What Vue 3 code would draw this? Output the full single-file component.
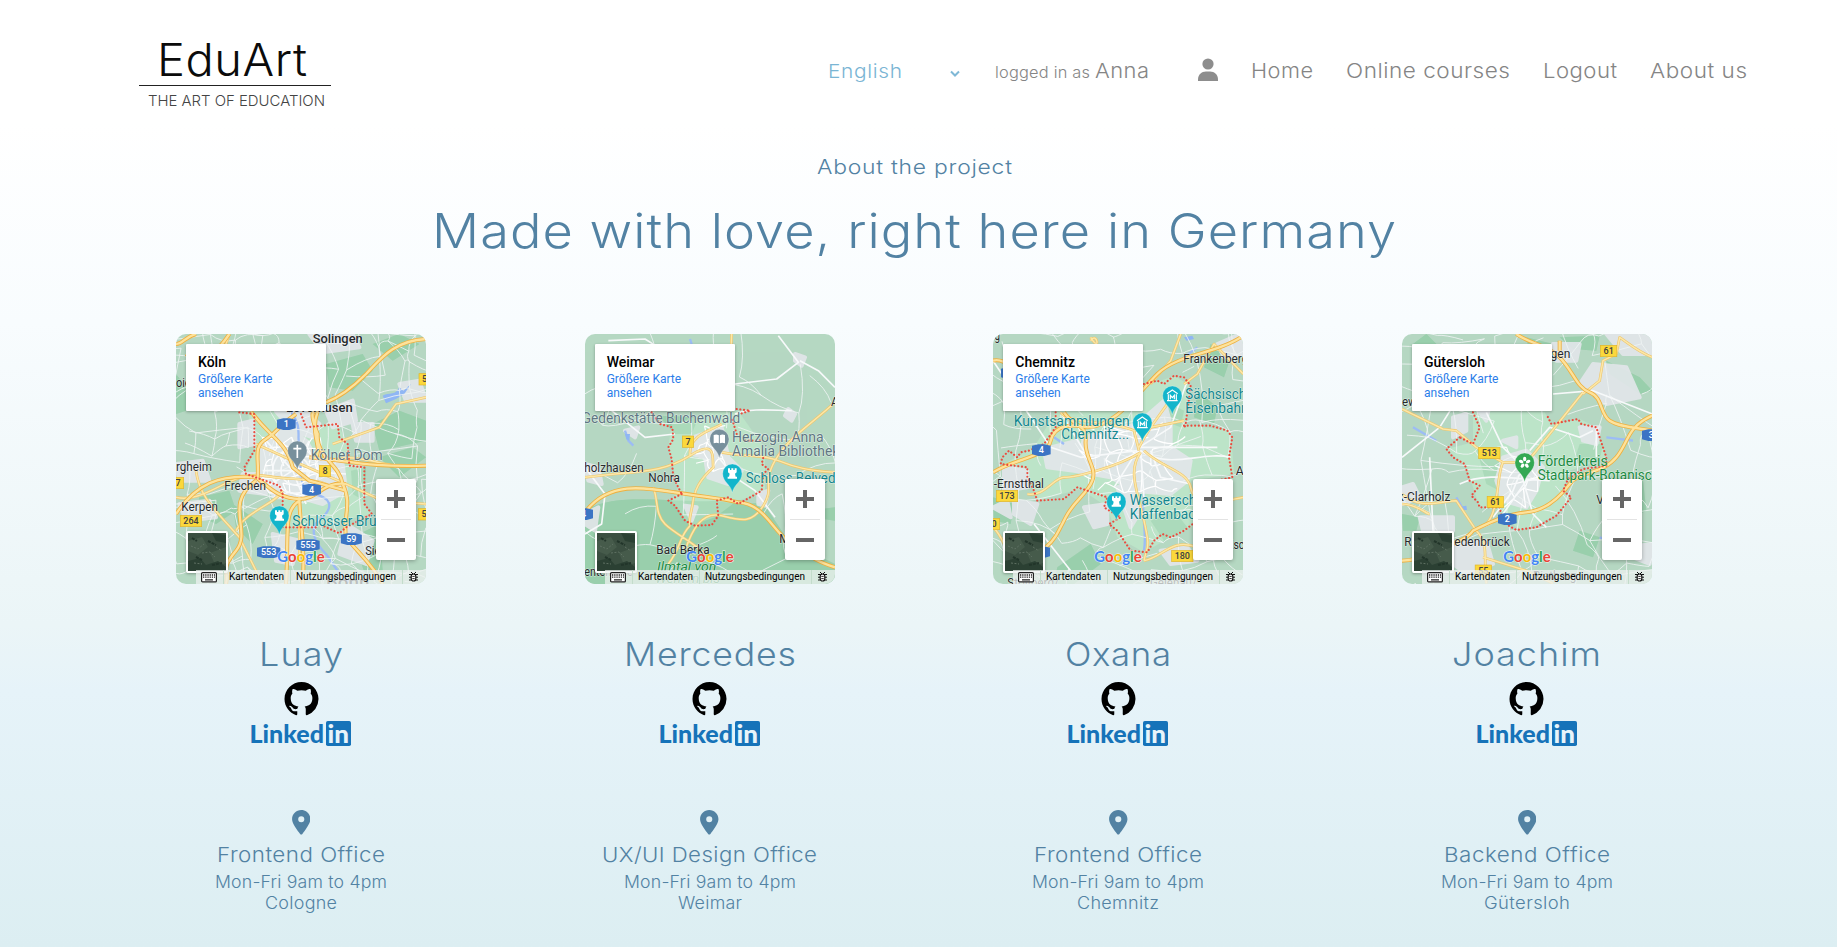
<script setup>
const LINKS = [
  { label: 'Home', w: 62 },
  { label: 'Online courses', w: 164 },
  { label: 'Logout', w: 74 },
  { label: 'About us', w: 97 },
]

// Widens the letters of an element, and the gaps between them, to a given width
const vFit = {
  mounted(el, { value }) {
    const natural = el.getBoundingClientRect().width
    const count = [...el.textContent.trim()].length
    const spacing = ((value - natural) * 0.3) / (count - 1)
    el.style.letterSpacing = spacing + 'px'
    el.style.width = value + 'px'
    el.style.transform = `scaleX(${value / (natural + spacing * (count - 1))})`
  },
}

// Web of small roads: jittered grid points joined to their neighbours
function roadWeb(seed, step, x0, y0, x1, y1, keep) {
  let s = seed
  const rnd = () => {
    s = (s * 16807) % 2147483647
    return s / 2147483647
  }
  const rows = []
  for (let y = y0; y <= y1; y += step) {
    const row = []
    for (let x = x0; x <= x1; x += step) {
      row.push([x + (rnd() - 0.5) * step * 0.9, y + (rnd() - 0.5) * step * 0.9])
    }
    rows.push(row)
  }
  let d = ''
  const join = (a, b) => {
    const mx = (a[0] + b[0]) / 2 + (rnd() - 0.5) * step * 0.4
    const my = (a[1] + b[1]) / 2 + (rnd() - 0.5) * step * 0.4
    d += `M${a[0].toFixed(1)} ${a[1].toFixed(1)}Q${mx.toFixed(1)} ${my.toFixed(1)} ${b[0].toFixed(1)} ${b[1].toFixed(1)}`
  }
  rows.forEach((row, j) =>
    row.forEach((p, i) => {
      if (row[i + 1] && rnd() < keep) join(p, row[i + 1])
      if (rows[j + 1] && rnd() < keep) join(p, rows[j + 1][i])
    })
  )
  return d
}

const GREY = '#5f7682'
const TEAL = '#12868f'
const DARK = '#26292c'
const GREEN = '#1b8a42'

const people = [
  {
    name: 'Luay', nameW: 84, office: 'Frontend Office', officeW: 168, city: 'Cologne', cityW: 72,
    place: 'Köln', ox: 30,
    light: 'M245 262L400 262 420 310 515 300 545 360 550 425 595 430 595 540 615 570 450 610 350 610 345 510 235 450 265 380Z',
    woods: 'M555 440L600 430 595 530 560 510ZM620 300L700 260 780 290 780 350 640 380ZM480 120L590 90 620 140 560 200 490 190ZM620 60L700 30 760 60 680 110ZM100 520L190 500 210 560 150 600 90 570ZM640 400L740 370 780 400 700 460ZM30 150L60 190 60 260 30 270ZM560 640L640 600 650 740 600 760ZM200 540L290 600 260 660 210 610Z',
    urban: 'M290 350L360 310 420 350 450 400 530 420 540 500 470 540 400 520 330 520 280 470ZM330 262L420 262 460 300 440 340 380 320ZM220 300L260 290 265 360 220 370ZM430 30L560 30 580 70 470 85ZM230 450L290 450 300 510 220 500ZM40 540L130 530 150 580 60 590ZM560 300L620 300 620 350 570 350ZM540 600L620 650 600 720 520 690ZM480 260L560 230 570 290 500 310ZM700 180L760 170 780 230 720 230ZM30 420L110 410 130 470 40 470ZM320 630L400 650 380 720 330 710Z',
    water: 'M372 262C420 320 380 340 410 400C390 450 410 500 440 510C500 520 500 550 470 580C420 610 450 660 480 690C510 730 520 760 560 780',
    lake: 'M650 215C670 205 690 215 700 190L712 200 735 180 715 210 690 225 660 238Z',
    web: [[17, 62, 0.62], [91, 100, 0.6]], core: [31, 26, 300, 350, 480, 510, 0.75],
    whites: 'M380 440L300 350 M380 440L430 350 M380 440L540 450 M380 440L420 540 M380 440L300 490 M290 440L470 440 M345 440A42 42 0 1 1 430 440A42 42 0 1 1 345 440 M320 440A68 68 0 1 1 456 440A68 68 0 1 1 320 440',
    minor: 'M30 520C120 540 190 440 290 455S450 460 500 490 M180 60L190 30 M485 410C600 380 640 440 780 425 M500 360L640 310 690 240 780 220 M90 440C100 520 150 560 220 640L290 780 M210 620C240 560 330 540 350 500 M540 480L650 530 780 540 M400 530V700 M270 360L380 410 540 480',
    major: 'M780 45C680 50 640 110 600 150S520 220 480 235 M480 235C420 250 440 290 455 330C450 400 520 420 530 480C560 540 530 580 540 640C570 680 620 720 650 780 M455 262C430 330 470 370 450 400 M255 262C310 340 360 350 380 430L430 470 540 500 M30 570C90 480 160 450 270 460C310 490 340 525 400 525S470 470 540 480 M275 460C280 400 260 370 300 345S330 310 390 270 M270 470C170 540 260 620 210 680S190 740 180 780 M400 520C400 600 420 650 410 780 M400 530C350 560 370 630 360 780 M30 60C50 60 55 40 90 30 M60 90C120 130 170 60 190 30 M430 400C550 410 600 430 780 425',
    border: 'M220 265L265 270 265 380 235 430 240 450 340 485 350 510 350 610 460 610 M405 270L420 310 515 300 520 340 545 360 550 425 595 430 595 540 618 570 540 610 520 628 470 605',
    shields: [['b', 361, 300, '1'], ['y', 477, 441, '8'], ['b', 437, 497, '4'], ['y', 36, 477, '7'], ['y', 75, 591, '264'], ['b', 308, 684, '553'], ['b', 426, 663, '555'], ['b', 556, 645, '59'], ['y', 776, 166, '5'], ['y', 774, 571, '5']],
    labels: [['Solingen', 440, 58, 150, 38, DARK, 500], ['Leverkusen', 360, 265, 200, 38, DARK, 500], ['oie', 30, 190, 44, 37, DARK], ['rgheim', 30, 441, 108, 37, DARK], ['Frechen', 175, 498, 125, 37, DARK], ['Kerpen', 46, 561, 110, 37, DARK], ['Siegburg', 598, 693, 130, 37, DARK], ['Bonn', 480, 792, 130, 50, DARK, 500], ['Kölner Dom', 434, 409, 216, 42, GREY], ['Schlösser Brühl', 379, 606, 285, 42, TEAL]],
    pins: [['#78909c', 394, 380, 'cross'], ['#12b5cb', 340, 575, 'tower']],
  },
  {
    name: 'Mercedes', nameW: 172, office: 'UX/UI Design Office', officeW: 215, city: 'Weimar', cityW: 64,
    place: 'Weimar', ox: 30,
    light: 'M290 300L420 262 490 262 560 360 570 410 570 500 480 535 420 580 345 605 290 530 310 490 280 370Z',
    woods: 'M250 275L370 280 350 330 300 330ZM30 560C130 500 300 540 420 530C520 550 560 520 580 560L640 650 780 720 780 780 30 780ZM700 560L780 550 780 590 710 580Z',
    urban: 'M340 345L440 310 460 400 500 440 460 480 400 460 390 400 350 390ZM640 255L660 270 650 290 630 275ZM660 90L690 100 680 125 660 110ZM550 510L580 500 570 545 550 540ZM30 420L70 430 80 480 40 470ZM30 570L70 550 60 620 30 600ZM330 545L365 550 350 590ZM150 320L190 310 180 340Z',
    water: 'M150 320L160 350 175 365 M345 45L350 60 M640 625C630 650 640 680 660 700',
    lake: 'M150 330L165 330 163 350 154 346Z',
    web: [[55, 105, 0.42]], core: [77, 26, 370, 310, 460, 460, 0.6],
    whites: 'M480 180L605 165 670 115 640 75 610 35 M675 110L730 140 780 190 M480 270C530 250 600 260 650 260 M110 260L210 340 300 330 M30 430L90 510 80 600 30 630 M430 400L480 460 540 500 600 580 M100 50L210 45 250 70',
    minor: 'M470 30L468 80 M780 235C710 300 640 340 600 410S600 490 565 545S500 590 440 575S350 620 330 680 M345 395C340 330 410 320 440 300 M30 460C180 440 260 450 345 395S410 410 415 430C360 480 360 510 355 525C350 570 340 580 345 605 M235 490C250 530 240 570 270 600S350 650 390 690 M440 385C520 400 560 390 610 410S700 440 780 445 M345 605C310 640 320 670 280 720',
    major: 'M30 565C100 470 210 490 300 505S430 520 490 535C570 540 590 620 650 660S720 710 780 730',
    border: 'M230 265L255 300 292 310 295 345 280 370 290 405 295 460 320 510 M320 510L280 530 300 545 330 590 360 605 410 603 430 575 425 530 460 520 490 540 560 500 565 450 580 435 560 420 565 400 M485 330L470 280 M485 255L525 260 495 270 M510 350L560 350',
    shields: [['y', 339, 353, '7'], ['b', 26, 570, '4']],
    labels: [['Gedenkstätte Buchenwald', 20, 296, 476, 42, GREY], ['Herzogin Anna', 471, 353, 275, 42, GREY], ['Amalia Bibliothek', 471, 395, 322, 42, GREY], ['holzhausen', 28, 443, 178, 37, DARK], ['Nohra', 220, 474, 95, 37, DARK], ['Bad Berka', 244, 690, 160, 37, DARK], ['Ilmtal von', 246, 740, 178, 40, GREEN, 400, 'italic'], ['Wehern bis', 240, 778, 195, 40, GREEN, 400, 'italic'], ['Me', 613, 656, 50, 37, DARK], ['Ap', 768, 245, 42, 37, DARK], ['entenrode', 28, 755, 145, 37, DARK], ['Schloss Belvedere', 512, 478, 325, 42, TEAL]],
    pins: [['#78909c', 433, 345, 'book'], ['#12b5cb', 472, 449, 'tower']],
  },
  {
    name: 'Oxana', nameW: 106, office: 'Frontend Office', officeW: 168, city: 'Chemnitz', cityW: 82,
    place: 'Chemnitz', ox: 27,
    light: 'M215 265L480 180 530 170 570 155 620 185 605 300 735 320 745 380 750 450 620 470 640 600 560 640 480 685 400 640 370 550 290 495 160 530 130 450 60 420 150 370Z',
    woods: 'M370 380L430 370 440 410 380 440ZM90 700L160 690 150 750 90 740ZM560 240L600 260 590 310 540 290ZM640 200L700 250 690 300 630 280ZM220 730L320 660 350 720 270 780 210 780ZM680 60L740 100 720 160 660 130ZM500 590L570 560 610 610 540 650ZM27 520L90 540 80 600 30 590Z',
    urban: 'M380 320L460 300 540 230 560 300 560 370 620 410 610 470 560 510 450 500 380 460 270 440 190 430 180 380 290 390 300 340ZM700 60L770 30 778 90 720 100ZM60 430L130 440 130 490 60 500ZM200 370L280 350 300 400 210 410ZM27 550L70 530 80 580ZM530 680L610 670 640 710 560 720ZM300 550L370 540 370 600 330 610ZM220 90L300 70 330 110ZM90 530L160 540 140 600 90 570ZM400 490L450 480 470 560 440 610Z',
    water: 'M210 340L240 360 M600 100L640 70 M480 510C470 580 490 620 480 680',
    lake: 'M600 40L625 35 630 45 608 50Z',
    web: [[23, 72, 0.55], [8, 120, 0.5]], core: [19, 36, 300, 310, 600, 510, 0.68],
    whites: 'M27 110L200 370 290 400 460 380 M230 265L330 430 M465 370L560 310 610 170 M465 370L700 370 M150 600L260 740 M330 450L470 380 480 520 M390 490L460 380 M500 380L530 460 620 480 M470 380C560 440 650 380 740 400',
    minor: 'M230 265C250 300 390 290 450 320L465 380 M450 320L500 310 600 290 M590 30L560 110 500 180 M320 50C340 20 350 90 320 40 M480 380C530 430 610 440 620 490S680 540 778 520 M130 510C180 520 210 460 240 460S400 430 470 385 M470 385C430 440 460 500 480 590S490 660 480 710 M480 710C540 700 560 640 640 670 M778 150L690 60 640 150 600 180 M27 610C60 640 60 680 90 700 M465 370C500 300 540 260 570 210 M360 250C420 210 450 190 480 190',
    major: 'M27 445C100 400 190 400 200 350S270 300 310 310C390 310 460 210 520 150S700 90 778 35 M240 265C270 310 310 300 305 350S340 430 325 470S270 530 245 580S210 650 185 670 M27 110C60 100 90 140 120 150',
    border: 'M480 180L520 170 540 180 570 155 600 160 620 185 605 300 600 315 M600 305L680 305 730 320 745 340 735 400 745 460 700 470 M215 265L215 310 180 360 135 380 110 385 100 400 75 380 55 400 50 420 130 430 130 460 150 500 160 530 240 525 280 490 370 520 360 550 410 580 375 600 400 620 440 680 490 685 510 650 535 630 560 640 600 620 640 590',
    shields: [['b', 172, 378, '4'], ['y', 69, 516, '173'], ['y', 595, 696, '180'], ['y', 30, 600, '0'], ['b', 79, 147, ''], ['b', 170, 684, '']],
    labels: [['rg', 22, 48, 26, 37, DARK], ['Frankenberg', 598, 116, 195, 37, DARK], ['-Ernstthal', 29, 491, 151, 37, DARK], ['Au', 755, 453, 44, 37, DARK], ['Zsch', 730, 674, 68, 37, DARK], ['Stollberg/', 70, 788, 155, 37, DARK], ['Gelenau/', 498, 788, 140, 37, DARK], ['Sächsisches', 604, 225, 224, 42, TEAL], ['Eisenbahn', 604, 266, 190, 42, TEAL], ['Kunstsammlungen', 89, 305, 348, 42, TEAL], ['Chemnitz...', 232, 346, 203, 42, TEAL], ['Wasserschloß', 437, 543, 257, 42, TEAL], ['Klaffenbach', 437, 584, 220, 42, TEAL]],
    pins: [['#12b5cb', 565, 215, 'museum'], ['#12b5cb', 475, 296, 'museum'], ['#12b5cb', 397, 533, 'tower']],
  },
  {
    name: 'Joachim', nameW: 149, office: 'Backend Office', officeW: 166, city: 'Gütersloh', cityW: 86,
    place: 'Gütersloh', ox: 27,
    light: 'M240 265L455 265 475 300 560 285 610 310 640 400 530 440 510 500 530 530 480 580 380 620 320 560 260 550 240 490 220 430 160 375 240 355Z',
    woods: 'M500 40L620 35 610 80 540 75ZM640 110L740 160 778 200 740 210 650 150ZM250 370L320 390 320 500 280 480ZM560 360L630 360 620 410 540 420ZM60 60L100 30 130 60 80 90ZM560 620L620 640 600 700 540 680ZM27 570L80 580 70 620 30 620ZM400 40L480 60 460 120 410 90ZM680 470L750 470 760 560 740 570Z',
    urban: 'M330 400L400 380 450 430 430 500 400 550 330 530 310 470ZM600 120L700 130 740 220 640 240 560 180ZM640 30L778 30 778 90 690 90ZM560 310L620 310 610 360 570 350ZM180 660L280 650 300 720 220 750 180 720ZM27 490L60 480 80 520 30 540ZM80 580L180 580 180 620 90 620ZM180 280L220 270 220 320 180 340ZM330 350L370 340 370 370ZM480 60L560 60 550 110 490 110ZM700 670L778 660 770 720 720 700ZM240 240L290 240 280 290Z',
    water: 'M190 520L210 555 M640 340L720 350 M60 310L130 350 M620 640L670 660',
    lake: 'M200 548L220 545 222 558 206 558Z',
    web: [[41, 88, 0.6], [63, 130, 0.5]], core: [12, 34, 320, 370, 440, 540, 0.7],
    whites: 'M280 265L330 370 370 410 M330 570L400 470 480 460 M370 400L420 570 460 610 M300 580L360 500 380 450 M410 380L470 310 560 340 600 320 M27 400L140 310 190 230 M480 210L600 200 778 270 M200 480C280 440 390 470 470 470 M110 400L120 620 180 670 M610 310L610 400',
    minor: 'M27 255L150 315 190 320 250 370 330 415 M330 415H380 M778 100C730 80 710 60 680 40L670 90 630 110 620 170 570 210 M570 205L430 380 380 440 M330 415C310 450 320 560 280 600L240 620 M27 510C80 560 150 530 190 530L250 620C290 660 270 700 280 778 M27 540C70 540 100 570 110 570 M270 700L400 740 480 778',
    major: 'M370 30C410 60 460 60 500 100S550 190 590 205S620 270 650 290S730 310 778 320 M778 275C700 310 710 350 670 400S560 440 530 480S460 560 400 565S280 600 240 620C220 650 170 660 130 680S60 710 27 710 M500 50L500 80',
    border: 'M240 265L260 310 240 360 200 340 M200 340L160 375 180 400 215 420 230 470 260 485 235 515 255 535 260 550 320 550 M320 550L330 595 370 618 430 610 490 575 535 520 510 500 525 465 570 435 640 425 640 400 610 310 565 300 555 285 475 300 460 270',
    shields: [['y', 647, 81, '61'], ['y', 289, 387, '513'], ['y', 307, 534, '61'], ['b', 343, 585, '2'], ['b', 775, 333, '3'], ['y', 271, 740, '55']],
    labels: [['lingen', 435, 102, 97, 37, DARK], ['ew', 27, 246, 44, 37, DARK], ['k-Clarholz', 14, 530, 158, 37, DARK], ['Rheda-Wiedenbrück', 34, 665, 316, 37, DARK], ['Verl', 610, 540, 62, 37, DARK], ['Rietberg', 420, 768, 130, 37, DARK], ['Förderkreis', 434, 426, 210, 42, GREEN], ['Stadtpark-Botanischer', 434, 467, 400, 42, GREEN]],
    pins: [['#34a853', 395, 416, 'flower']],
  },
]

const shieldW = (kind, t) => 34 + Math.max(0, t.length - 1) * (kind === 'b' ? 7 : 15)
function blueShield([kind, x, y, t]) {
  const h = shieldW(kind, t) / 2
  return `M${x - h - 11} ${y - 13}L${x - h + 8} ${y - 17}H${x + h - 8}L${x + h + 11} ${y - 13}V${y + 13}L${x + h - 8} ${y + 18}H${x - h + 8}L${x - h - 11} ${y + 13}Z`
}
for (const p of people) {
  p.roads = p.web.map(([seed, step, keep]) => roadWeb(seed, step, p.ox - 20, 10, 820, 820, keep)).join('')
  const [seed, step, x0, y0, x1, y1, keep] = p.core
  p.coreRoads = roadWeb(seed, step, x0, y0, x1, y1, keep)
}
</script>

<template>
  <div class="page">
    <header class="header">
      <div class="brand">
        <div class="brand-name"><span v-fit="150">EduArt</span></div>
        <div class="brand-line"></div>
        <div class="brand-tag"><span v-fit="177">THE ART OF EDUCATION</span></div>
      </div>
      <nav class="nav">
        <span v-fit="74" class="lang">English</span>
        <svg class="chev" viewBox="0 0 10 8"><path d="M1 1.5L5 5.5 9 1.5" fill="none" stroke="#7fb8d6" stroke-width="2" /></svg>
        <span v-fit="95" class="logged">logged in as</span>
        <span v-fit="54" class="user">Anna</span>
        <svg class="person" viewBox="0 0 20 23"><circle cx="10" cy="6" r="5.6" fill="#8d8d8d" /><path d="M0 23V21.5C0 16.500 3.500 13.500 8 13.500H12C16.500 13.500 20 16.500 20 21.500V23Z" fill="#8d8d8d" /></svg>
        <div class="links">
          <a v-for="l in LINKS" :key="l.label" v-fit="l.w">{{ l.label }}</a>
        </div>
      </nav>
    </header>

    <section class="intro">
      <p class="sub"><span v-fit="195">About the project</span></p>
      <h1 class="title"><span v-fit="964">Made with love, right here in Germany</span></h1>
    </section>

    <main class="team">
      <article v-for="p in people" :key="p.name" class="member">
        <div class="map">
          <svg class="canvas" :viewBox="`${p.ox} 30 750 750`">
            <rect :x="p.ox" y="30" width="750" height="750" fill="#b5d8c2" />
            <path :d="p.woods" fill="#9ccfae" />
            <path :d="p.light" fill="#bce4c8" />
            <path :d="p.woods" fill="#97cfaa" opacity=".45" />
            <path :d="p.urban" fill="#e3e6ea" stroke="#e3e6ea" stroke-width="12" stroke-linejoin="round" opacity=".9" />
            <path :d="p.water" fill="none" stroke="#9cbcf5" stroke-width="7" />
            <path :d="p.lake" fill="#8fb6f4" />
            <g fill="none" stroke-linejoin="round">
              <path :d="p.roads" stroke="#eef3f3" stroke-width="3" opacity=".85" />
              <path :d="p.coreRoads" stroke="#fff" stroke-width="3.500" />
              <path :d="p.whites" stroke="#f7f9fa" stroke-width="5" />
              <path :d="p.minor" stroke="#eec66b" stroke-width="8" />
              <path :d="p.minor" stroke="#fce7a8" stroke-width="4.500" />
              <path :d="p.major" stroke="#edb040" stroke-width="12" />
              <path :d="p.major" stroke="#fde29b" stroke-width="7" />
              <path :d="p.border" stroke="#ea4c3f" stroke-width="6.500" stroke-linecap="round" stroke-dasharray="0.1 11" />
            </g>
            <g v-for="(s, i) in p.shields" :key="i" class="shield">
              <path v-if="s[0] === 'b'" :d="blueShield(s)" fill="#3b74c4" />
              <rect v-else :x="s[1] - shieldW(s[0], s[3]) / 2" :y="s[2] - 17" :width="shieldW(s[0], s[3])" height="34" fill="#fbd83b" stroke="#e0b52c" stroke-width="2" />
              <text :x="s[1]" :y="s[2] + 9" text-anchor="middle" :fill="s[0] === 'b' ? '#fff' : '#3c4043'">{{ s[3] }}</text>
            </g>
            <text
              v-for="l in p.labels" :key="l[0]" class="label"
              :x="l[1]" :y="l[2]" :textLength="l[3]" lengthAdjust="spacingAndGlyphs"
              :font-size="l[4]" :fill="l[5]" :font-weight="l[6] || 400" :font-style="l[7] || 'normal'"
            >{{ l[0] }}</text>
            <g v-for="(m, i) in p.pins" :key="'pin' + i" :transform="`translate(${m[1]} ${m[2]})`">
              <path d="M0 57C-4 32 -29 25 -29 0A29 29 0 1 1 29 0C29 25 4 32 0 57Z" :fill="m[0]" stroke="#fff" stroke-opacity=".5" stroke-width="1.500" />
              <path v-if="m[3] === 'cross'" d="M0 -18V22M-12 -6H12" stroke="#fff" stroke-width="5" fill="none" />
              <path v-if="m[3] === 'tower'" d="M-13 -16H-7V-11H-3V-16H3V-11H7V-16H13V-4L8 0 10 9H14V15H-14V9H-10L-8 0 -13 -4Z" fill="#fff" />
              <path v-if="m[3] === 'book'" d="M-17 -12Q-8 -16 -1.500 -11V13Q-8 9 -17 13ZM17 -12Q8 -16 1.500 -11V13Q8 9 17 13Z" fill="#fff" />
              <path v-if="m[3] === 'museum'" d="M-16 -6L0 -17 16 -6M-12 -4V14M12 -4V14M-16 15H16M-6 11V-1L0 6 6 -1V11" fill="none" stroke="#fff" stroke-width="3.500" />
              <g v-if="m[3] === 'flower'" fill="#fff">
                <ellipse v-for="a in 5" :key="a" cx="0" cy="-11" rx="5" ry="7" :transform="`rotate(${a * 72})`" />
              </g>
            </g>
            <text class="google" :x="p.ox + 304" y="714" textLength="142" lengthAdjust="spacingAndGlyphs"><tspan fill="#4285f4">G</tspan><tspan fill="#ea4335">o</tspan><tspan fill="#fbbc04">o</tspan><tspan fill="#4285f4">g</tspan><tspan fill="#34a853">l</tspan><tspan fill="#ea4335">e</tspan></text>
          </svg>
          <div class="place">
            <div class="place-name">{{ p.place }}</div>
            <div class="place-link">Größere Karte<br />ansehen</div>
          </div>
          <svg class="thumb" viewBox="0 0 38 38">
            <rect width="38" height="38" fill="#3b4f41" />
            <path d="M0 8L14 4 20 14 10 22 0 18ZM22 20L38 14V30L28 34Z" fill="#465b4b" />
            <path d="M0 28L12 25 18 32 30 28 38 34V38H0ZM24 0L38 2V10L28 8Z" fill="#2b4033" />
            <path d="M3 13L10 16 16 11M14 20L22 19 27 24M6 30L14 31M28 14L34 18" fill="none" stroke="#5f7163" stroke-width="1" stroke-dasharray="2 1.500" />
            <path d="M4 5L9 8M20 8L28 12M8 24L14 27M24 32L34 30" fill="none" stroke="#22352a" stroke-width="2" stroke-dasharray="3 1" />
          </svg>
          <div class="zoom">
            <svg viewBox="0 0 40 40"><path d="M11 20H29M20 11V29" stroke="#666" stroke-width="4" /></svg>
            <i></i>
            <svg viewBox="0 0 40 40"><path d="M11 20H29" stroke="#666" stroke-width="4" /></svg>
          </div>
          <div class="foot">
            <svg class="keys" viewBox="0 0 16 11"><rect x=".6" y=".6" width="14.800" height="9.300" rx="1" fill="#fff" stroke="#222" stroke-width="1.200" /><path d="M2 3H14M2 5.200H14" stroke="#222" stroke-width="1.300" stroke-dasharray="1.300 .9" /><path d="M4 7.900H12" stroke="#222" stroke-width="1.300" /></svg>
            <i class="rule"></i>
            <span v-fit="55">Kartendaten</span>
            <i class="rule"></i>
            <span v-fit="100">Nutzungsbedingungen</span>
            <i class="rule"></i>
            <svg class="bug" viewBox="0 0 9 10"><path d="M0 2.500H9M0 5.200H9M0 8H9M2 0L4 2M7 0L5 2" stroke="#111" stroke-width="1" /><rect x="2.200" y="2" width="4.600" height="7" rx="2.300" fill="#fff" stroke="#111" stroke-width="1.200" /><path d="M3.300 4.400H5.700M3.300 6.600H5.700" stroke="#111" stroke-width=".9" /></svg>
          </div>
        </div>

        <h2 class="name"><span v-fit="p.nameW">{{ p.name }}</span></h2>
        <svg class="github" viewBox="0 0 16 16"><path d="M8 0C3.580 0 0 3.580 0 8c0 3.540 2.290 6.530 5.470 7.590.4.070.55-.17.55-.38 0-.19-.01-.82-.01-1.490-2.010.37-2.530-.49-2.690-.94-.09-.23-.48-.94-.82-1.130-.28-.15-.68-.52-.01-.53.63-.01 1.080.58 1.230.82.72 1.210 1.870.87 2.330.66.07-.52.28-.87.51-1.070-1.780-.2-3.640-.89-3.640-3.950 0-.87.31-1.590.82-2.150-.08-.2-.36-1.020.08-2.120 0 0 .67-.21 2.200.82.64-.18 1.320-.27 2-.27s1.360.09 2 .27c1.530-1.040 2.200-.82 2.200-.82.44 1.100.16 1.920.08 2.120.51.56.82 1.270.82 2.150 0 3.070-1.870 3.750-3.650 3.950.29.25.54.73.54 1.480 0 1.070-.01 1.930-.01 2.200 0 .21.15.46.55.38A8.010 8.010 0 0 0 16 8c0-4.420-3.580-8-8-8z" /></svg>
        <svg class="linkedin" viewBox="0 0 100 25">
          <text x="-1.500" y="21.500" textLength="74.500" lengthAdjust="spacingAndGlyphs" font-size="25" fill="#1673b9">Linked</text>
          <rect x="75" width="25" height="25" rx="1.800" fill="#1673b9" />
          <text x="76.600" y="21.500" textLength="21.500" lengthAdjust="spacingAndGlyphs" font-size="25" fill="#e8f4fa">in</text>
        </svg>

        <svg class="pin" viewBox="0 0 384 512"><path d="M215.700 499.200C267 435 384 279.400 384 192 384 86 298 0 192 0S0 86 0 192c0 87.400 117 243 168.300 307.200 12.300 15.300 35.100 15.300 47.400 0zM192 128a64 64 0 1 1 0 128 64 64 0 1 1 0-128z" /></svg>
        <div class="office"><span v-fit="p.officeW">{{ p.office }}</span></div>
        <div class="hours"><span v-fit="172">Mon-Fri 9am to 4pm</span></div>
        <div class="hours"><span v-fit="p.cityW">{{ p.city }}</span></div>
      </article>
    </main>
  </div>
</template>

<style>
body {
  margin: 0;
  overflow: hidden;
}
</style>

<style scoped>
.page {
  height: 947px;
  width: 1837px;
  overflow: hidden;
  box-sizing: border-box;
  font-family: Inter, "Liberation Sans", sans-serif;
  font-weight: 350;
  font-variant-ligatures: none;
  color: #5282a3;
  background: linear-gradient(180deg, #fff 0%, #fff 13%, #f8fcfe 34%, #ebf5f7 66%, #e6f3f9 73%, #dceef2 100%);
}
.page span,
.page a {
  display: inline-block;
  white-space: nowrap;
  text-align: left;
  transform-origin: left center;
}
.header {
  height: 140px;
  display: flex;
  padding-left: 139px;
}
.brand {
  width: 192px;
  padding-top: 36px;
  text-align: center;
  color: #0b0b0b;
}
.brand-name {
  height: 49px;
  line-height: 47px;
  font-size: 45px;
  padding-right: 6px;
}
.brand-line {
  height: 1px;
  background: #222;
}
.brand-tag {
  font-size: 15px;
  line-height: 20px;
  padding: 5px 0 0 3px;
  color: #444;
}
.nav {
  display: flex;
  align-items: baseline;
  height: 30px;
  margin: 55px 0 0 497px;
  line-height: 30px;
  font-size: 20.600px;
  color: #858585;
}
.lang {
  font-size: 18.500px;
  color: #7ab5d4;
}
.chev {
  width: 10px;
  height: 8px;
  margin: 0 35px 5px 48px;
}
.logged {
  font-size: 15.500px;
}
.user {
  margin-left: 5px;
}
.person {
  width: 20px;
  height: 23px;
  margin: 0 33px -3px 49px;
  position: relative;
  top: 3px;
}
.links {
  display: flex;
  gap: 33px;
}
.intro {
  width: 1828px;
  height: 194px;
  text-align: center;
}
.sub {
  margin: 0;
  padding-top: 12px;
  font-size: 20px;
  line-height: 30px;
}
.title {
  margin: 19px 0 0;
  font-size: 48px;
  font-weight: 350;
  line-height: 60px;
}
.team {
  display: grid;
  grid-template-columns: repeat(4, 408.660px);
  padding-left: 96.700px;
}
.member {
  display: flex;
  flex-direction: column;
  align-items: center;
}
.map {
  position: relative;
  width: 250px;
  height: 250px;
  border-radius: 10px;
  overflow: hidden;
  font-family: Roboto, "Liberation Sans", sans-serif;
  font-weight: 400;
}
.canvas {
  display: block;
  width: 250px;
  height: 250px;
}
.shield text {
  font: 500 27px Roboto, sans-serif;
}
.label {
  font-family: Roboto, sans-serif;
  paint-order: stroke;
  stroke: rgba(255, 255, 255, 0.6);
  stroke-width: 3px;
  stroke-linejoin: round;
}
.google {
  font: 700 45px Lato, sans-serif;
  paint-order: stroke;
  stroke: rgba(255, 255, 255, 0.8);
  stroke-width: 3px;
}
.place {
  position: absolute;
  left: 10px;
  top: 10px;
  width: 140px;
  height: 67px;
  padding: 10px 12px 0;
  box-sizing: border-box;
  border-radius: 1px;
  background: #fff;
  box-shadow: 0 1px 3px rgba(0, 0, 0, 0.3);
}
.place-name {
  font-size: 14px;
  font-weight: 500;
  line-height: 16px;
  color: #000;
}
.place-link {
  margin-top: 2px;
  font-size: 12px;
  line-height: 14px;
  color: #2b7de9;
}
.thumb {
  position: absolute;
  left: 10px;
  top: 197px;
  width: 38px;
  height: 38px;
  border: 2px solid #fff;
  border-radius: 2px;
  box-shadow: 0 1px 3px rgba(0, 0, 0, 0.3);
}
.zoom {
  position: absolute;
  left: 200px;
  top: 145px;
  width: 40px;
  height: 81px;
  border-radius: 2px;
  background: #fff;
  box-shadow: 0 1px 4px rgba(0, 0, 0, 0.3);
}
.zoom svg {
  display: block;
  width: 40px;
  height: 40px;
}
.zoom i {
  display: block;
  width: 30px;
  height: 1px;
  margin: 0 auto;
  background: #e3e3e3;
}
.foot {
  position: absolute;
  left: 20px;
  right: 0;
  bottom: 0;
  height: 14px;
  display: flex;
  align-items: center;
  padding-left: 5px;
  box-sizing: border-box;
  font-size: 10px;
  line-height: 12px;
  color: #000;
  background: rgba(238, 242, 240, 0.75);
}
.foot span {
  margin-top: -1px;
}
.keys {
  width: 16px;
  height: 11px;
}
.rule {
  width: 1px;
  height: 14px;
  margin: 0 5px 0 6px;
  background: #c3dccb;
}
.bug {
  width: 9px;
  height: 10px;
  margin-left: 1px;
}
.name {
  margin: 46px 0 0;
  font-size: 33px;
  font-weight: 350;
  line-height: 48px;
}
.github {
  width: 35px;
  height: 34px;
  margin-top: 4px;
}
.linkedin {
  width: 100px;
  height: 25px;
  margin-top: 5px;
  overflow: visible;
  font-family: Lato, sans-serif;
  font-weight: 900;
}
.pin {
  width: 18.500px;
  height: 24.500px;
  margin-top: 64px;
  fill: #5282a3;
}
.office {
  margin-top: 4px;
  font-size: 20.500px;
  line-height: 32px;
}
.hours {
  font-size: 17px;
  line-height: 21px;
}
.office + .hours {
  margin-top: 1px;
}
</style>
